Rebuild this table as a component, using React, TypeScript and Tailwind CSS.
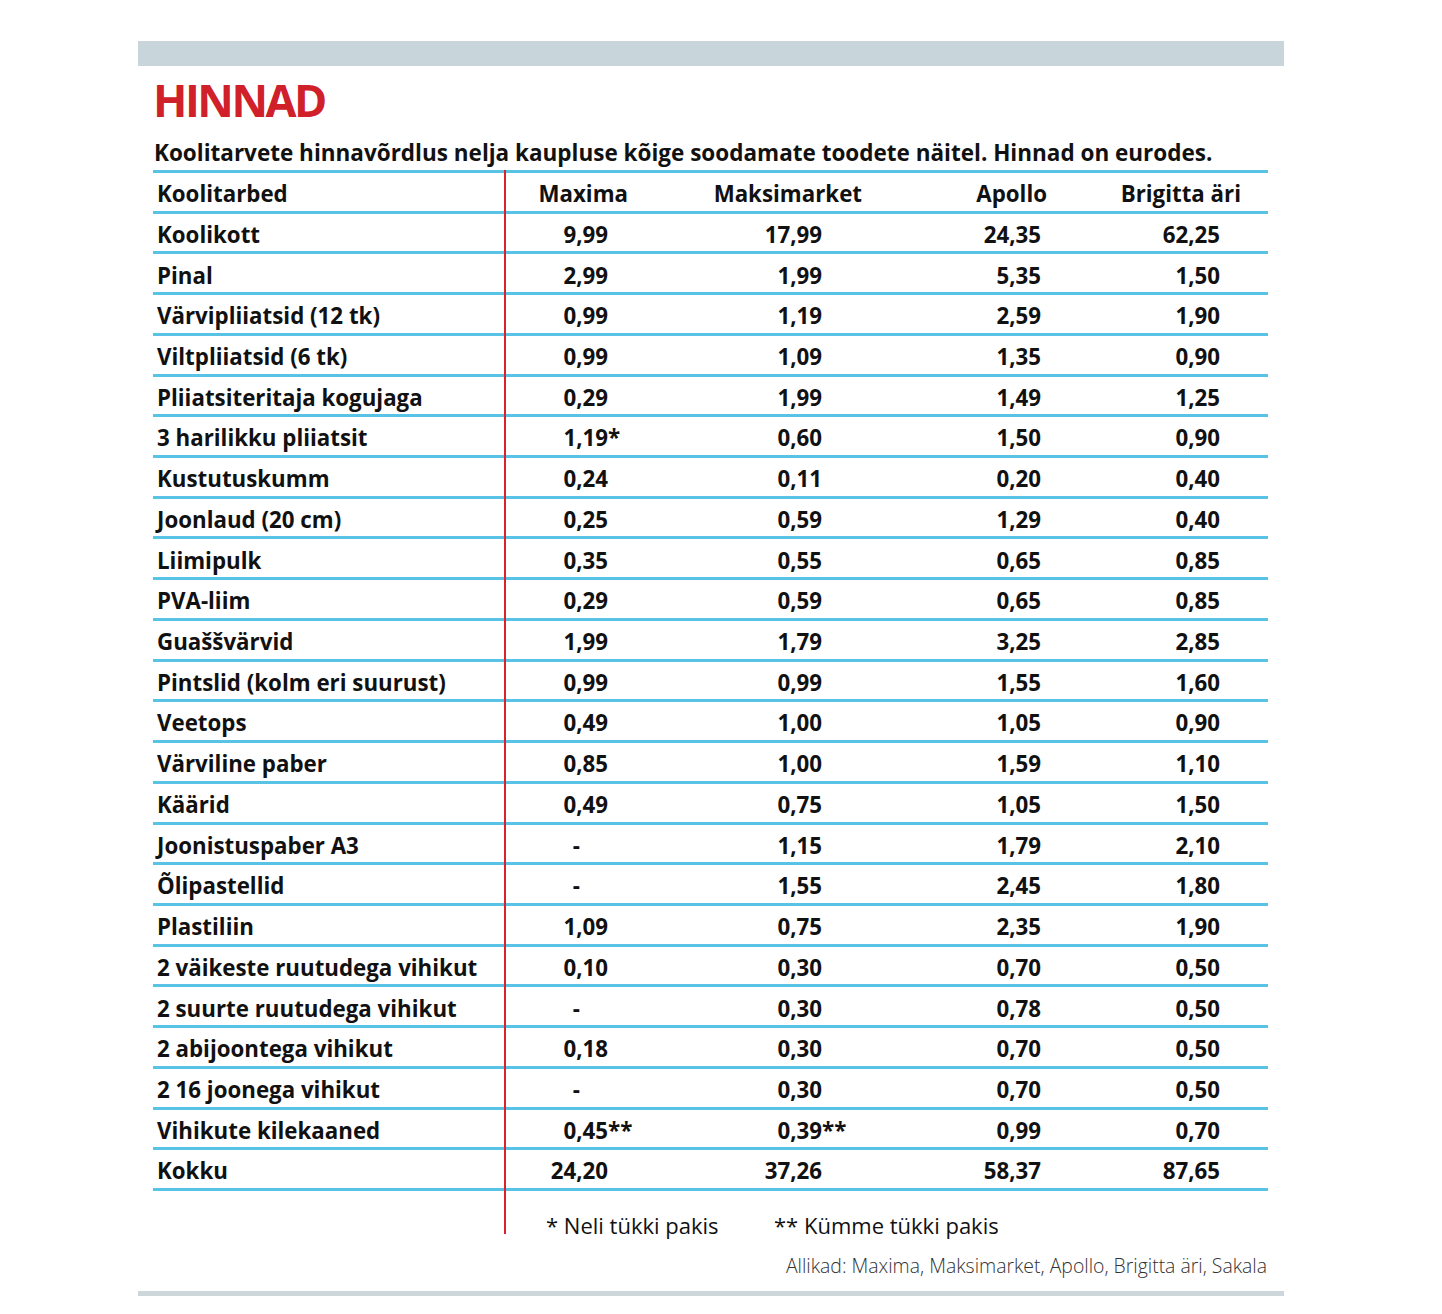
import React from "react";

type Row = { label: string; values: string[] };

const rows: Row[] = [
  { label: "Koolikott", values: ["9,99", "17,99", "24,35", "62,25"] },
  { label: "Pinal", values: ["2,99", "1,99", "5,35", "1,50"] },
  { label: "Värvipliiatsid (12 tk)", values: ["0,99", "1,19", "2,59", "1,90"] },
  { label: "Viltpliiatsid (6 tk)", values: ["0,99", "1,09", "1,35", "0,90"] },
  { label: "Pliiatsiteritaja kogujaga", values: ["0,29", "1,99", "1,49", "1,25"] },
  { label: "3 harilikku pliiatsit", values: ["1,19*", "0,60", "1,50", "0,90"] },
  { label: "Kustutuskumm", values: ["0,24", "0,11", "0,20", "0,40"] },
  { label: "Joonlaud (20 cm)", values: ["0,25", "0,59", "1,29", "0,40"] },
  { label: "Liimipulk", values: ["0,35", "0,55", "0,65", "0,85"] },
  { label: "PVA-liim", values: ["0,29", "0,59", "0,65", "0,85"] },
  { label: "Guaššvärvid", values: ["1,99", "1,79", "3,25", "2,85"] },
  { label: "Pintslid (kolm eri suurust)", values: ["0,99", "0,99", "1,55", "1,60"] },
  { label: "Veetops", values: ["0,49", "1,00", "1,05", "0,90"] },
  { label: "Värviline paber", values: ["0,85", "1,00", "1,59", "1,10"] },
  { label: "Käärid", values: ["0,49", "0,75", "1,05", "1,50"] },
  { label: "Joonistuspaber A3", values: ["-", "1,15", "1,79", "2,10"] },
  { label: "Õlipastellid", values: ["-", "1,55", "2,45", "1,80"] },
  { label: "Plastiliin", values: ["1,09", "0,75", "2,35", "1,90"] },
  { label: "2 väikeste ruutudega vihikut", values: ["0,10", "0,30", "0,70", "0,50"] },
  { label: "2 suurte ruutudega vihikut", values: ["-", "0,30", "0,78", "0,50"] },
  { label: "2 abijoontega vihikut", values: ["0,18", "0,30", "0,70", "0,50"] },
  { label: "2 16 joonega vihikut", values: ["-", "0,30", "0,70", "0,50"] },
  { label: "Vihikute kilekaaned", values: ["0,45**", "0,39**", "0,99", "0,70"] },
  { label: "Kokku", values: ["24,20", "37,26", "58,37", "87,65"] },
];

// widths and right paddings per shop column
const cols = [
  { name: "Maxima", cell: "w-[174px] pr-[72px]", head: "w-[174px] pr-[52px]" },
  { name: "Maksimarket", cell: "w-[220px] pr-[78px]", head: "w-[220px] pr-[38px]" },
  { name: "Apollo", cell: "w-[190px] pr-[49px]", head: "w-[190px] pr-[43px]" },
  { name: "Brigitta äri", cell: "w-[178px] pr-[48px]", head: "w-[178px] pr-[27px]" },
];

const rowCls = "h-[40.72px] pt-[4px] border-b-[3px] border-[#58c3e4] flex items-center";

function Value({ v }: { v: string }) {
  if (v === "-") return <span className="pr-[28px]">-</span>;
  const m = v.match(/^([\d,]+)(\**)$/);
  const num = m ? m[1] : v;
  const star = m ? m[2] : "";
  return (
    <span className="tabular-nums whitespace-nowrap">
      {num}
      {star && <span className="inline-block w-0 overflow-visible">{star}</span>}
    </span>
  );
}

export default function App() {
  return (
    <div className="w-[1442px] h-[1314px] bg-white text-[#111]" style={{ fontFamily: "'Open Sans', Lato, sans-serif" }}>
      <div className="pt-[41px] pl-[138px] w-[1284px]">
        <div className="h-[25px] bg-[#c8d5da]" />

        <div className="pl-[15px] w-[1130px]">
          <h1 className="mt-[11px] text-[45px] leading-none font-bold text-[#d0202a] tracking-[-2.5px]">HINNAD</h1>
          <p className="mt-[18px] pl-[1px] text-[22.5px] leading-[26px] font-bold">
            Koolitarvete hinnavõrdlus nelja kaupluse kõige soodamate toodete näitel. Hinnad on eurodes.
          </p>

          {/* table */}
          <div className="mt-[4px] flex text-[22.3px] font-bold">
            <div className="w-[351px] border-t-[3px] border-[#58c3e4] self-start">
              <div className={rowCls + " pl-[4px]"}>Koolitarbed</div>
              {rows.map((r) => (
                <div key={r.label} className={rowCls + " pl-[4px]"}>{r.label}</div>
              ))}
            </div>

            <div className="w-[2px] bg-[#d8232a]" />

            <div className="w-[762px]">
              <div className="border-t-[3px] border-[#58c3e4]">
                <div className={rowCls}>
                  {cols.map((c) => (
                    <div key={c.name} className={c.head + " text-right"}>{c.name}</div>
                  ))}
                </div>
                {rows.map((r) => (
                  <div key={r.label} className={rowCls}>
                    {r.values.map((v, i) => (
                      <div key={i} className={cols[i].cell + " text-right"}>
                        <Value v={v} />
                      </div>
                    ))}
                  </div>
                ))}
              </div>
              <div className="h-[43px] flex items-end text-[22px] font-normal">
                <span className="ml-[40px] w-[228px] translate-y-[8px]">* Neli tükki pakis</span>
                <span className="translate-y-[8px]">** Kümme tükki pakis</span>
              </div>
            </div>
          </div>

          <div className="mt-[20px] text-right text-[19.4px] leading-[24px] font-light text-[#333] pr-[1px]">
            Allikad: Maxima, Maksimarket, Apollo, Brigitta äri, Sakala
          </div>
        </div>

        <div className="mt-[13px] h-[5px] bg-[#cdd6da]" />
      </div>
    </div>
  );
}
